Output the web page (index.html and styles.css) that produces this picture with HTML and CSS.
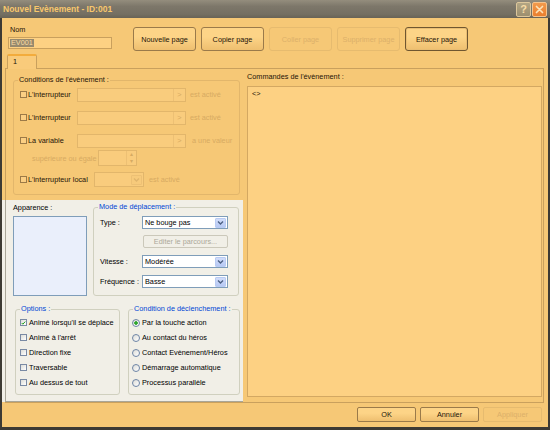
FILE: index.html
```html
<!DOCTYPE html>
<html lang="fr">
<head>
    <meta charset="UTF-8">
    <title>Nouvel Evènement - ID:001</title>
    <link rel="stylesheet" href="styles.css">
</head>
<body>
<div class="window">
    <div class="titlebar">
        <span class="title">Nouvel Evènement - ID:001</span>
        <div class="caption-btns">
            <span class="cap-btn cap-help">?</span>
            <span class="cap-btn cap-close">
                <svg width="9" height="9" viewBox="0 0 9 9"><path d="M1.5 1.5l6 6M7.5 1.5l-6 6" stroke="#fde3b8" stroke-width="1.7" stroke-linecap="round"/></svg>
            </span>
        </div>
    </div>

    <div class="client">
        <div class="top-row">
            <div class="name-field">
                <div class="lbl">Nom</div>
                <div class="textbox"><span class="sel">EV001</span></div>
            </div>
            <div class="page-btns">
                <button class="btn">Nouvelle page</button>
                <button class="btn">Copier page</button>
                <button class="btn" disabled>Coller page</button>
                <button class="btn" disabled>Supprimer page</button>
                <button class="btn btn-focus">Effacer page</button>
            </div>
        </div>

        <div class="tabs"><div class="tab">1</div></div>

        <div class="tab-page">
            <div class="left-col">
                <!-- conditions -->
                <fieldset class="group group-cond">
                    <legend>Conditions de l'évènement :</legend>
                    <div class="cond-row">
                        <label class="check check-wide"><span class="box"></span>L'interrupteur</label>
                        <div class="picker"><span class="picker-btn">&gt;</span></div>
                        <span class="muted">est activé</span>
                    </div>
                    <div class="cond-row">
                        <label class="check check-wide"><span class="box"></span>L'interrupteur</label>
                        <div class="picker"><span class="picker-btn">&gt;</span></div>
                        <span class="muted">est activé</span>
                    </div>
                    <div class="cond-row">
                        <label class="check check-wide"><span class="box"></span>La variable</label>
                        <div class="picker"><span class="picker-btn">&gt;</span></div>
                        <span class="muted muted-far">a une valeur</span>
                    </div>
                    <div class="cond-row cond-sub">
                        <span class="muted sub-lbl">supérieure ou égale</span>
                        <div class="spin">
                            <span class="spin-btns"><span>&#9652;</span><span>&#9662;</span></span>
                        </div>
                    </div>
                    <div class="cond-row">
                        <label class="check check-local"><span class="box"></span>L'interrupteur local</label>
                        <div class="combo combo-off">
                            <span class="combo-arrow">
                                <svg width="9" height="9" viewBox="0 0 9 9"><path d="M2 3.5l2.5 2.5 2.5-2.5" fill="none" stroke="#e0b56c" stroke-width="1.4"/></svg>
                            </span>
                        </div>
                        <span class="muted muted-local">est activé</span>
                    </div>
                </fieldset>

                <!-- the part left in its normal colours -->
                <div class="lower">
                    <div class="lower-top">
                        <div class="appearance">
                            <div class="lbl">Apparence :</div>
                            <div class="preview"></div>
                        </div>
                        <fieldset class="group group-blue group-move">
                            <legend>Mode de déplacement :</legend>
                            <div class="move-row">
                                <span class="move-lbl">Type :</span>
                                <div class="combo"><span class="combo-text">Ne bouge pas</span>
                                    <span class="combo-arrow"><svg width="9" height="9" viewBox="0 0 9 9"><path d="M2 3.5l2.5 2.5 2.5-2.5" fill="none" stroke="#4d6185" stroke-width="1.4"/></svg></span>
                                </div>
                            </div>
                            <div class="move-row">
                                <span class="move-lbl"></span>
                                <button class="btn btn-path" disabled>Editer le parcours...</button>
                            </div>
                            <div class="move-row">
                                <span class="move-lbl">Vitesse :</span>
                                <div class="combo"><span class="combo-text">Modérée</span>
                                    <span class="combo-arrow"><svg width="9" height="9" viewBox="0 0 9 9"><path d="M2 3.5l2.5 2.5 2.5-2.5" fill="none" stroke="#4d6185" stroke-width="1.4"/></svg></span>
                                </div>
                            </div>
                            <div class="move-row">
                                <span class="move-lbl">Fréquence :</span>
                                <div class="combo"><span class="combo-text">Basse</span>
                                    <span class="combo-arrow"><svg width="9" height="9" viewBox="0 0 9 9"><path d="M2 3.5l2.5 2.5 2.5-2.5" fill="none" stroke="#4d6185" stroke-width="1.4"/></svg></span>
                                </div>
                            </div>
                        </fieldset>
                    </div>

                    <div class="lower-bottom">
                        <fieldset class="group group-blue group-options">
                            <legend>Options :</legend>
                            <label class="check opt-row"><span class="box"><svg width="7" height="7" viewBox="0 0 7 7"><path d="M1 3.5l1.6 1.7L6 1.5" fill="none" stroke="#21a121" stroke-width="1.4"/></svg></span>Animé lorsqu'il se déplace</label>
                            <label class="check opt-row"><span class="box"></span>Animé à l'arrêt</label>
                            <label class="check opt-row"><span class="box"></span>Direction fixe</label>
                            <label class="check opt-row"><span class="box"></span>Traversable</label>
                            <label class="check opt-row"><span class="box"></span>Au dessus de tout</label>
                        </fieldset>
                        <fieldset class="group group-blue group-trigger">
                            <legend>Condition de déclenchement :</legend>
                            <label class="radio opt-row"><span class="dot on"></span>Par la touche action</label>
                            <label class="radio opt-row"><span class="dot"></span>Au contact du héros</label>
                            <label class="radio opt-row"><span class="dot"></span>Contact Evènement/Héros</label>
                            <label class="radio opt-row"><span class="dot"></span>Démarrage automatique</label>
                            <label class="radio opt-row"><span class="dot"></span>Processus parallèle</label>
                        </fieldset>
                    </div>
                </div>
            </div>

            <div class="right-col">
                <div class="lbl">Commandes de l'évènement :</div>
                <div class="listbox"><div class="cmd">&lt;&gt;</div></div>
            </div>
        </div>

        <div class="footer">
            <button class="btn btn-foot">OK</button>
            <button class="btn btn-foot">Annuler</button>
            <button class="btn btn-foot" disabled>Appliquer</button>
        </div>
    </div>
</div>
</body>
</html>
```

FILE: styles.css
```css
/* the whole dialog is washed in orange, except the lower left panel */
:root {
    --face: #f6c876;
    --field: #fdd183;
    --text: #1e1408;
    --muted: #d6aa62;
    --line: #e2b66b;
    --frame: #c9a05d;
    --box-border: #9c7a47;
    --box-bg: #fbcf83;
    --btn-border: #9a7a4a;
    --btn-top: #fdd487;
    --btn-bottom: #eebf70;
    --btn-off-border: #e6bb6f;
    --btn-off-text: #dcb06a;
}

* {
    margin: 0;
    padding: 0;
    box-sizing: border-box;
}

body {
    font-family: "Liberation Sans", Arial, sans-serif;
    font-size: 7.3px;
    color: var(--text);
    background: #3d3a34;
}

.window {
    width: 550px;
    height: 430px;
    display: flex;
    flex-direction: column;
}

/* title bar */
.titlebar {
    height: 18px;
    flex: none;
    display: flex;
    align-items: center;
    justify-content: space-between;
    padding: 0 3px;
    background: linear-gradient(#948d7d, #7d776a 35%, #746f62 80%, #686356);
}

.title {
    color: #f8c76c;
    font-weight: bold;
    font-size: 8.5px;
}

.caption-btns {
    display: flex;
    gap: 1px;
}

.cap-btn {
    width: 15px;
    height: 15px;
    border: 1px solid #dcc79c;
    border-radius: 2px;
    display: flex;
    align-items: center;
    justify-content: center;
    color: #f7dca6;
    font-weight: bold;
    font-size: 11px;
}

.cap-help {
    background: linear-gradient(#b3a684, #9c8f6f);
}

.cap-close {
    border-color: #f6c48c;
    background: linear-gradient(#f29a4c, #ea7f2e);
}

/* client area */
.client {
    flex: 1;
    background: var(--face);
    border: 2px solid #3d3a34;
    border-top: 0;
    border-bottom-width: 3px;
    display: flex;
    flex-direction: column;
}

.lbl {
    line-height: 10px;
    white-space: nowrap;
}

.top-row {
    display: flex;
    padding: 6px 0 0 6px;
}

.name-field {
    width: 104px;
    margin-right: 21px;
}

.name-field .lbl {
    padding-left: 2px;
    line-height: 11px;
}

.textbox {
    margin-top: 2px;
    height: 12px;
    border: 1px solid var(--frame);
    background: var(--field);
    padding: 1px;
    line-height: 8px;
}

.sel {
    display: inline-block;
    background: #978a6e;
    color: #f8dca4;
    padding: 0 1px;
}

.page-btns {
    display: flex;
    gap: 5px;
    margin-top: 3px;
}

.btn {
    font-family: inherit;
    font-size: 7.3px;
    color: var(--text);
    border: 1px solid var(--btn-border);
    border-radius: 3px;
    background: linear-gradient(var(--btn-top), var(--btn-top) 40%, var(--btn-bottom));
    white-space: nowrap;
}

.btn:disabled {
    color: var(--btn-off-text);
    border-color: var(--btn-off-border);
    background: var(--face);
}

.page-btns .btn {
    width: 63px;
    height: 24px;
}

.btn-focus {
    border-color: #6f5630;
    box-shadow: inset 0 0 0 1px #e9bd72;
}

/* tabs */
.tabs {
    display: flex;
    margin: 3px 0 0 5px;
}

.tab {
    position: relative;
    width: 30px;
    height: 15px;
    margin-bottom: -1px;
    padding: 1px 0 0 5px;
    border: 1px solid var(--frame);
    border-top: 2px solid #f3ac3c;
    border-bottom: 0;
    border-radius: 2px 2px 0 0;
    background: #f9cb7b;
    line-height: 10px;
}

.tab-page {
    width: 539px;
    height: 335px;
    margin-left: 3px;
    border: 1px solid var(--frame);
    display: flex;
}

.left-col {
    width: 237px;
    padding: 6px 0 0 7px;
}

/* group boxes */
.group {
    border: 1px solid var(--line);
    border-radius: 3px;
    padding: 2px 6px 7px;
    min-width: 0;
}

.group legend {
    padding: 0 1px;
    margin-left: -2px;
    line-height: 10px;
    white-space: nowrap;
}

.group-blue legend {
    color: #0046d5;
}

.group-cond {
    width: 227px;
}

.cond-row {
    display: flex;
    align-items: center;
    height: 15px;
    margin-top: 8px;
    white-space: nowrap;
}

.cond-row:first-of-type {
    margin-top: 0;
}

.cond-sub {
    height: 16px;
    margin-top: 2px;
    padding-left: 12px;
}

.cond-sub + .cond-row {
    margin-top: 6px;
}

.check,
.radio {
    display: flex;
    align-items: center;
    white-space: nowrap;
}

.check-wide {
    width: 57px;
}

.check-local {
    width: 74px;
}

.box {
    width: 7px;
    height: 7px;
    flex: none;
    margin-right: 1px;
    border: 1px solid var(--box-border);
    background: var(--box-bg);
    display: flex;
    align-items: center;
    justify-content: center;
}

.box svg {
    width: 6px;
    height: 6px;
}

.dot {
    width: 8px;
    height: 8px;
    flex: none;
    margin-right: 2px;
    border: 1px solid #6e85a6;
    border-radius: 50%;
    background: linear-gradient(135deg, #dcdcd7, #fff);
}

.dot.on {
    background: radial-gradient(circle, #2ea52e 0 1.5px, transparent 2px), linear-gradient(135deg, #dcdcd7, #fff);
}

.muted {
    color: var(--muted);
    margin-left: 4px;
}

.muted-far {
    margin-left: 6px;
}

.muted-local {
    margin-left: 5px;
}

.sub-lbl {
    width: 66px;
    margin-left: 0;
}

.picker {
    width: 109px;
    height: 14px;
    border: 1px solid var(--line);
    background: #f9cc7d;
    display: flex;
    justify-content: flex-end;
}

.picker-btn {
    width: 12px;
    border-left: 1px solid #edc074;
    color: var(--muted);
    text-align: center;
    line-height: 12px;
}

.spin {
    width: 39px;
    height: 16px;
    border: 1px solid var(--line);
    background: #f9cc7d;
    display: flex;
    justify-content: flex-end;
}

.spin-btns {
    width: 10px;
    display: flex;
    flex-direction: column;
    color: var(--muted);
    font-size: 6px;
    line-height: 7px;
    text-align: center;
    border-left: 1px solid #edc074;
}

/* combos */
.combo {
    width: 86px;
    height: 13px;
    border: 1px solid #7f9db9;
    background: #fff;
    display: flex;
    align-items: center;
    justify-content: space-between;
    padding: 0 1px 0 2px;
}

.combo-off {
    width: 50px;
    height: 15px;
    border-color: var(--line);
    background: #f9cc7d;
    justify-content: flex-end;
}

.combo-arrow {
    width: 11px;
    height: 10px;
    border: 1px solid #b9cbf3;
    border-radius: 1px;
    background: linear-gradient(#d2ddfa, #b7c9f4);
    display: flex;
    align-items: center;
    justify-content: center;
}

.combo-off .combo-arrow {
    border-color: #edc074;
    background: #f7ca7b;
}

/* lower panel: normal XP colours, it also covers the tab frame around it */
.lower {
    --face: #f1efe7;
    --text: #000;
    --line: #d0d0bf;
    --box-border: #7a8aa4;
    --box-bg: linear-gradient(135deg, #dcdcd7, #fff);
    --btn-off-border: #cbc8ba;
    --btn-off-text: #aca899;
    width: 241px;
    height: 202px;
    margin: 5px 0 0 -11px;
    padding: 2px 0 0 11px;
    color: var(--text);
    background:
        linear-gradient(#a9a698, #a9a698) 3px 0 / 1px 100% no-repeat,
        linear-gradient(#a9a698, #a9a698) 3px 100% / 100% 1px no-repeat,
        var(--face);
}

.lower-top {
    display: flex;
}

.appearance {
    width: 74px;
    margin-right: 6px;
    padding-top: 1px;
}

.preview {
    margin-top: 3px;
    height: 80px;
    border: 1px solid #7f9db9;
    background: #eaeffb;
}

.group-move {
    width: 146px;
    padding: 4px 6px 7px;
}

.move-row {
    display: flex;
    align-items: center;
    height: 13px;
    margin-top: 7px;
    white-space: nowrap;
}

.move-row:first-of-type {
    margin-top: 0;
}

.move-row:nth-of-type(2) {
    margin-top: 6px;
}

.move-lbl {
    width: 42px;
}

.btn-path {
    width: 85px;
    height: 13px;
    margin-left: 1px;
    border-radius: 2px;
}

.lower-bottom {
    display: flex;
    gap: 8px;
    margin-top: 8px;
    padding-left: 2px;
}

.group-options {
    width: 105px;
    padding: 1px 4px 4px;
}

.group-options legend {
    margin-left: 0;
}

.group-trigger {
    width: 112px;
    padding: 1px 3px 4px;
}

.group-trigger legend {
    margin-left: 1px;
}

.opt-row {
    height: 15px;
}

.opt-row .box {
    margin-right: 2px;
}

/* commands */
.right-col {
    width: 295px;
    margin-left: 4px;
    padding-top: 3px;
}

.listbox {
    margin-top: 4px;
    height: 311px;
    border: 1px solid #d3a862;
    background: var(--field);
}

.cmd {
    padding: 3px 0 0 4px;
    line-height: 8px;
}

/* footer */
.footer {
    display: flex;
    justify-content: flex-end;
    gap: 4px;
    padding: 4px 6px 0 0;
}

.btn-foot {
    width: 59px;
    height: 15px;
    border-radius: 2px;
}
```
